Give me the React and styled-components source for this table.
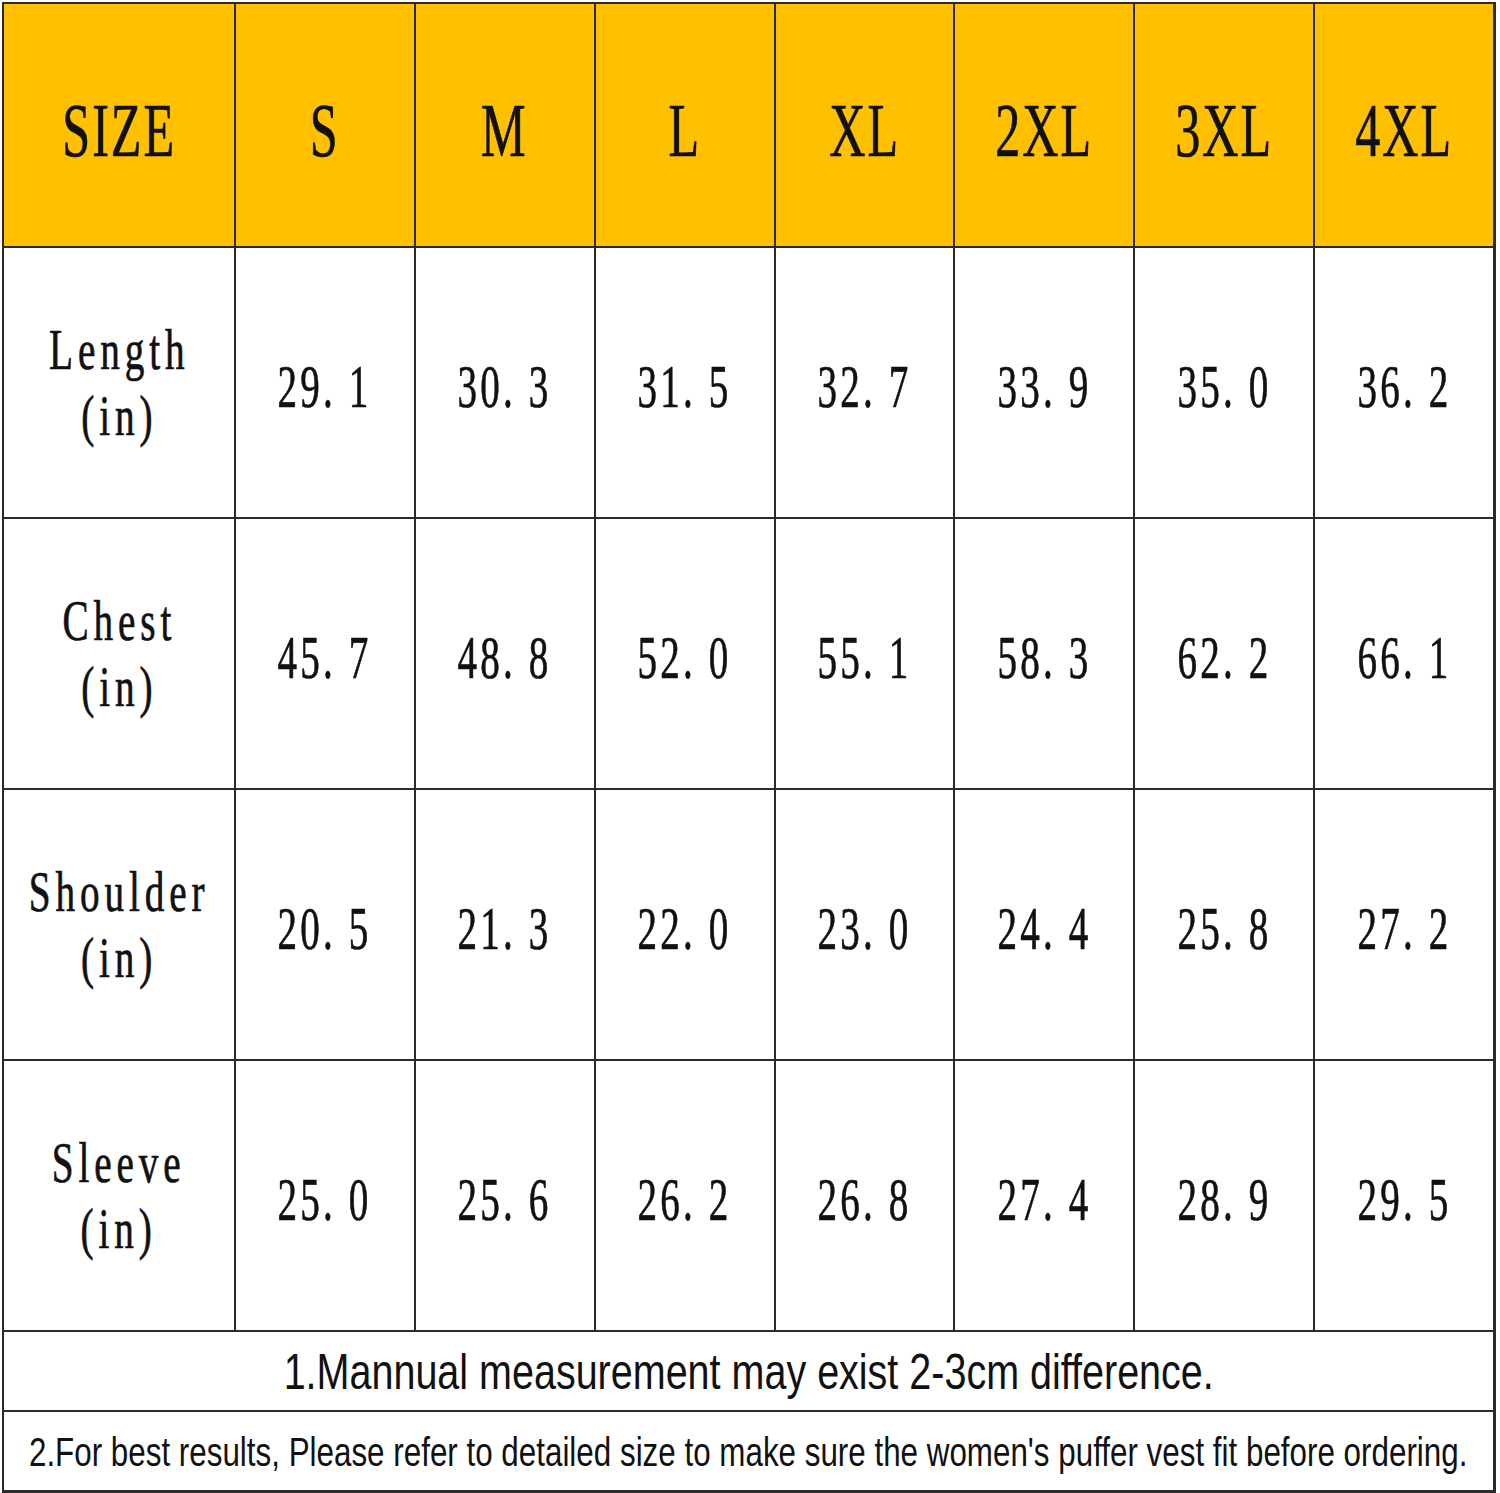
import React from "react";
import styled, { createGlobalStyle } from "styled-components";

const Global = createGlobalStyle`
    body {
        margin: 0;
        background: #ffffff;
    }
`

const Page = styled.div`
    padding: 2px 4px 3px 2px;
    width: 1500px;
    box-sizing: border-box;
`
const Chart = styled.div`
    display: grid;
    grid-template-columns: 232px repeat(7, 1fr);
    grid-template-rows: 244px repeat(4, 271px) 80px 80px;
    border-top: 2px solid #2b2b2b;
    border-left: 2px solid #2b2b2b;
    border-right: 1px solid #2b2b2b;
    border-bottom: 1px solid #2b2b2b;
`
const Cell = styled.div`
    display: flex;
    align-items: center;
    justify-content: center;
    flex-direction: column;
    background: ${p => (p.$head ? "#ffc000" : "#ffffff")};
    border-right: 2px solid #2b2b2b;
    border-bottom: 2px solid #2b2b2b;
    color: #111;
    font-family: "Liberation Serif", "DejaVu Serif", serif;
    -webkit-text-stroke: 0.7px #111;
    overflow: hidden;
`
const HeadText = styled.span`
    display: inline-block;
    font-size: 76px;
    letter-spacing: 3px;
    transform: scaleX(0.66);
    margin-top: 10px;
`
const Value = styled.span`
    display: inline-block;
    font-size: 62px;
    letter-spacing: 5px;
    white-space: pre;
    transform: scaleX(0.63);
    margin-top: 8px;
`
const Label = styled.span`
    display: inline-block;
    font-size: 56px;
    line-height: 66px;
    letter-spacing: 7px;
    text-align: center;
    transform: scaleX(0.7);
    white-space: nowrap;
`
const Note = styled.div`
    grid-column: 1 / -1;
    display: flex;
    align-items: center;
    justify-content: center;
    border-right: 2px solid #2b2b2b;
    border-bottom: 2px solid #2b2b2b;
    font-family: "Liberation Sans", Arial, sans-serif;
    color: #111;
    min-width: 0;
`
const NoteText = styled.span`
    flex: none;
    display: inline-block;
    white-space: nowrap;
    font-size: ${p => p.$size}px;
    transform: scaleX(${p => p.$squeeze});
    margin-top: ${p => p.$shift}px;
`

const sizes = ["S", "M", "L", "XL", "2XL", "3XL", "4XL"];

const rows = [
    { name: "Length", values: ["29. 1", "30. 3", "31. 5", "32. 7", "33. 9", "35. 0", "36. 2"] },
    { name: "Chest", values: ["45. 7", "48. 8", "52. 0", "55. 1", "58. 3", "62. 2", "66. 1"] },
    { name: "Shoulder", values: ["20. 5", "21. 3", "22. 0", "23. 0", "24. 4", "25. 8", "27. 2"] },
    { name: "Sleeve", values: ["25. 0", "25. 6", "26. 2", "26. 8", "27. 4", "28. 9", "29. 5"] },
];

export default function App() {
    return (
        <Page>
            <Global />
            <Chart>
                <Cell $head><HeadText>SIZE</HeadText></Cell>
                {sizes.map(s => (
                    <Cell $head key={s}><HeadText>{s}</HeadText></Cell>
                ))}
                {rows.map(r => (
                    <React.Fragment key={r.name}>
                        <Cell>
                            <Label>{r.name}<br />(in)</Label>
                        </Cell>
                        {r.values.map((v, i) => (
                            <Cell key={i}><Value>{v}</Value></Cell>
                        ))}
                    </React.Fragment>
                ))}
                <Note>
                    <NoteText $size={50} $squeeze={0.79} $shift={2}>1.Mannual measurement may exist 2-3cm difference.</NoteText>
                </Note>
                <Note>
                    <NoteText $size={41} $squeeze={0.765} $shift={2}>2.For best results, Please refer to detailed size to make sure the women's puffer vest fit before ordering.</NoteText>
                </Note>
            </Chart>
        </Page>
    )
}
